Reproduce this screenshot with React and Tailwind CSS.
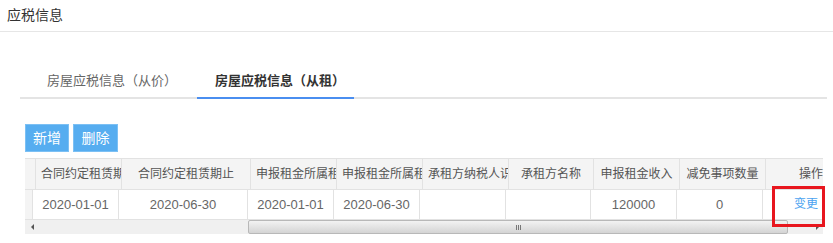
import React from 'react';

const columns = [
  { title: '', width: 8 },
  { title: '合同约定租赁期起', width: 86 },
  { title: '合同约定租赁期止', width: 129 },
  { title: '申报租金所属租赁期起', width: 86 },
  { title: '申报租金所属租赁期止', width: 86 },
  { title: '承租方纳税人识别号', width: 86 },
  { title: '承租方名称', width: 85 },
  { title: '申报租金收入', width: 86 },
  { title: '减免事项数量', width: 86 },
  { title: '操作', width: 60, right: true },
];

const row = ['', '2020-01-01', '2020-06-30', '2020-01-01', '2020-06-30', '', '', '120000', '0'];

const App = () => {
  return (
    <div
      className="relative w-[833px] h-[243px] bg-white overflow-hidden text-[#333]"
      style={{ fontFamily: '"Liberation Sans", "Noto Sans CJK SC", sans-serif' }}
    >
      <div className="h-[32px] border-b border-[#e6e6e6] pl-[7px] flex items-center text-[14px] text-[#333]">
        应税信息
      </div>

      <div className="mt-[36px] ml-[20px] w-[807px] h-[31px] border-b-2 border-[#e4e4e4] flex">
        <div className="w-[177px] pl-[27px] text-[13px] text-[#666] leading-[26px]">房屋应税信息（从价）</div>
        <div className="w-[157px] -mb-[2px] border-b-2 border-[#4a8ef0] pl-[18px] text-[13px] font-bold text-[#333] leading-[26px]">
          房屋应税信息（从租）
        </div>
      </div>

      <div className="mt-[25px] ml-[25px] flex gap-[4px]">
        <button className="w-[44px] h-[28px] bg-[#56adf0] border border-[#7cc0f4] text-white text-[14px]">新增</button>
        <button className="w-[45px] h-[28px] bg-[#56adf0] border border-[#7cc0f4] text-white text-[14px]">删除</button>
      </div>

      <div className="mt-[6px] ml-[25px] w-[798px]">
        <div className="flex h-[32px] bg-[#f4f4f4] border-t border-b border-[#e2e2e2]">
          {columns.map((c, i) => (
            <div
              key={i}
              style={{ width: c.width }}
              className={
                'shrink-0 overflow-hidden whitespace-nowrap px-[5px] leading-[30px] text-[12px] text-[#555] ' +
                (c.right ? 'text-right pr-[3px]' : 'text-center border-r border-[#e2e2e2]')
              }
            >
              {c.title}
            </div>
          ))}
        </div>
        <div className="flex h-[30px] border-b border-[#e2e2e2]">
          {row.map((v, i) => (
            <div
              key={i}
              style={{ width: columns[i].width }}
              className={
                'shrink-0 overflow-hidden whitespace-nowrap leading-[29px] text-center text-[13px] text-[#666] border-r border-[#e2e2e2] ' +
                (i === 0 ? 'bg-[#f4f4f4]' : '')
              }
            >
              {v}
            </div>
          ))}
          <div className="w-[60px] shrink-0 leading-[29px] text-right pr-[5px] text-[12px] text-[#4ba3f0]">变更</div>
        </div>

        <div className="flex h-[14px] bg-[#f0f0f0] items-center">
          <div className="w-[15px] h-full flex items-center justify-center">
            <div className="w-0 h-0 border-y-[3px] border-y-transparent border-r-[3px] border-r-[#555]" />
          </div>
          <div className="w-[208px]" />
          <div className="w-[540px] h-[14px] rounded-[2px] border border-[#b8b8b8] bg-gradient-to-b from-[#f2f2f2] to-[#d4d4d4] flex items-center justify-center gap-[1px]">
            <div className="w-px h-[5px] bg-[#777]" />
            <div className="w-px h-[5px] bg-[#777]" />
            <div className="w-px h-[5px] bg-[#777]" />
          </div>
          <div className="flex-1 flex items-center justify-end pr-[4px]">
            <div className="w-0 h-0 border-y-[3px] border-y-transparent border-l-[3px] border-l-[#555]" />
          </div>
        </div>
      </div>

      <div className="absolute left-[772px] top-[186px] w-[53px] h-[41px] border-[3px] border-[#e8161e]" />
    </div>
  );
};

export default App;
